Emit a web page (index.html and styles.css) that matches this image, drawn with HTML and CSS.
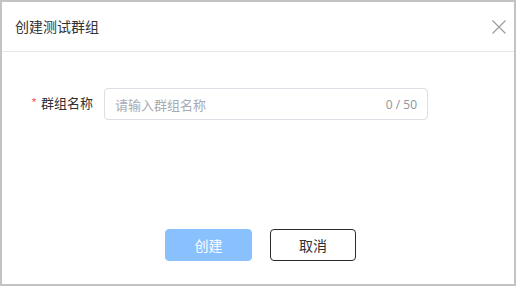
FILE: index.html
```html
<!DOCTYPE html>
<html lang="zh">
<head>
<meta charset="utf-8">
<link rel="stylesheet" href="styles.css">
</head>
<body>
<div class="dialog">
  <div class="header">
    <span class="title">创建测试群组</span>
    <span class="close">
      <svg width="14" height="14" viewBox="0 0 14 14"><path d="M0.5 0.5 L13.5 13.5 M13.5 0.5 L0.5 13.5" stroke="#9a9ca1" stroke-width="1.2" fill="none"/></svg>
    </span>
  </div>
  <div class="body">
    <div class="form-row">
      <label class="label"><span class="req">*</span>群组名称</label>
      <div class="input">
        <span class="placeholder">请输入群组名称</span>
        <span class="count">0 / 50</span>
      </div>
    </div>
  </div>
  <div class="footer">
    <button class="btn btn-primary">创建</button>
    <button class="btn btn-default">取消</button>
  </div>
</div>
</body>
</html>
```
FILE: styles.css
```css
html, body {
  margin: 0;
  padding: 0;
  background: #ffffff;
}
body {
  font-family: "Open Sans", "Noto Sans CJK SC", sans-serif;
  color: #303133;
}
.dialog {
  box-sizing: border-box;
  width: 516px;
  height: 286px;
  border: 2px solid #c3c3c3;
  display: flex;
  flex-direction: column;
  background: #fff;
}
.header {
  height: 49px;
  border-bottom: 1px solid #e4e7ed;
  display: flex;
  align-items: center;
  justify-content: space-between;
  padding: 0 8px 0 13px;
}
.title {
  font-family: "Noto Sans CJK SC", sans-serif;
  font-size: 14px;
  color: #303133;
  margin-top: -1px;
}
.close {
  display: flex;
  width: 14px;
  height: 14px;
}
.body {
  padding-top: 36px;
  flex: 1;
}
.form-row {
  display: flex;
  align-items: center;
  padding-left: 22px;
}
.label {
  flex-shrink: 0;
  white-space: nowrap;
  width: 80px;
  box-sizing: border-box;
  text-align: right;
  padding-right: 11px;
  font-family: "Noto Sans CJK SC", sans-serif;
  font-size: 13px;
  color: #303133;
  margin-top: -4px;
}
.req {
  color: #f56c6c;
  margin-right: 4px;
}
.input {
  flex-shrink: 0;
  box-sizing: border-box;
  width: 324px;
  height: 32px;
  border: 1px solid #dcdfe6;
  border-radius: 4px;
  display: flex;
  align-items: center;
  justify-content: space-between;
  padding: 0 10px 0 10px;
}
.placeholder {
  font-family: "Noto Sans CJK SC", sans-serif;
  font-size: 13px;
  color: #a8abb2;
}
.count {
  font-family: "Open Sans", sans-serif;
  font-size: 12px;
  color: #909399;
}
.footer {
  display: flex;
  justify-content: center;
  gap: 18px;
  padding-bottom: 23px;
  padding-left: 5px;
}
.btn {
  box-sizing: border-box;
  height: 32px;
  width: 86px;
  border-radius: 4px;
  font-family: "Noto Sans CJK SC", sans-serif;
  font-size: 14px;
  padding: 0;
}
.btn-primary {
  background: #89c0fe;
  border: 1px solid #89c0fe;
  color: #fff;
  width: 87px;
}
.btn-default {
  background: #fff;
  border: 1px solid #2b2b2b;
  color: #303133;
}
```
